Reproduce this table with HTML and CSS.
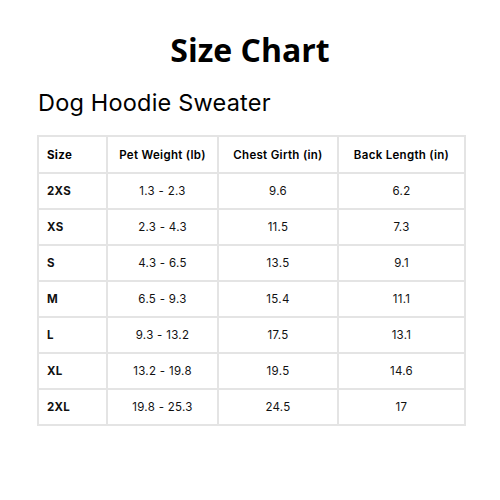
FILE: index.html
```html
<!DOCTYPE html>
<html>
<head>
<meta charset="utf-8">
<link rel="stylesheet" href="styles.css">
</head>
<body>
<div class="page">
  <h1 class="title">Size Chart</h1>
  <h2 class="subtitle">Dog Hoodie Sweater</h2>
  <table class="chart">
    <colgroup>
      <col class="c1"><col class="c2"><col class="c3"><col class="c4">
    </colgroup>
    <thead>
      <tr><th class="size">Size</th><th>Pet Weight (lb)</th><th>Chest Girth (in)</th><th>Back Length (in)</th></tr>
    </thead>
    <tbody>
      <tr><td class="size">2XS</td><td>1.3 - 2.3</td><td>9.6</td><td>6.2</td></tr>
      <tr><td class="size">XS</td><td>2.3 - 4.3</td><td>11.5</td><td>7.3</td></tr>
      <tr><td class="size">S</td><td>4.3 - 6.5</td><td>13.5</td><td>9.1</td></tr>
      <tr><td class="size">M</td><td>6.5 - 9.3</td><td>15.4</td><td>11.1</td></tr>
      <tr><td class="size">L</td><td>9.3 - 13.2</td><td>17.5</td><td>13.1</td></tr>
      <tr><td class="size">XL</td><td>13.2 - 19.8</td><td>19.5</td><td>14.6</td></tr>
      <tr><td class="size">2XL</td><td>19.8 - 25.3</td><td>24.5</td><td>17</td></tr>
    </tbody>
  </table>
</div>
</body>
</html>
```
FILE: styles.css
```css
html, body {
  margin: 0;
  padding: 0;
  background: #ffffff;
}
.page {
  width: 500px;
  height: 500px;
  padding: 30px 0 0 37px;
  box-sizing: border-box;
  color: #000;
  font-family: "Open Sans", sans-serif;
}
.title {
  margin: 0 0 0 -37px;
  width: 500px;
  text-align: center;
  font-size: 32px;
  font-weight: 700;
  line-height: 40px;
  letter-spacing: 0;
}
.subtitle {
  margin: 18px 0 0 1px;
  font-family: "Inter", sans-serif;
  font-size: 23.5px;
  font-weight: 400;
  letter-spacing: 0.2px;
  line-height: 30px;
}
.chart {
  margin-top: 17px;
  border-collapse: collapse;
  table-layout: fixed;
  width: 427px;
  font-family: "Inter", sans-serif;
  font-size: 11.5px;
  letter-spacing: 0.3px;
}
.c1 { width: 69px; }
.c2 { width: 111px; }
.c3 { width: 120px; }
.c4 { width: 127px; }
.chart th, .chart td {
  border: 2px solid #e4e4e4;
  height: 34px;
  padding: 0;
  text-align: center;
  vertical-align: middle;
}
.chart th {
  font-weight: 600;
  height: 35px;
}
.chart td {
  font-weight: 400;
  color: #111;
}
.chart .size {
  text-align: left;
  padding-left: 8px;
  font-weight: 700;
}
```
